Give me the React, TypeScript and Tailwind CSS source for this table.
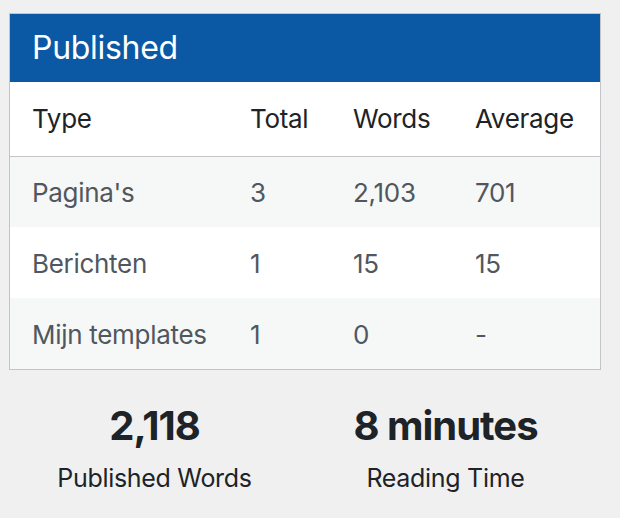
const rows = [
  { type: "Pagina's", total: "3", words: "2,103", average: "701" },
  { type: 'Berichten', total: '1', words: '15', average: '15' },
  { type: 'Mijn templates', total: '1', words: '0', average: '-' },
]

export default function App() {
  return (
    <div
      className="w-[620px] h-[518px] bg-[#f0f0f1] pt-[13px] pl-[9px]"
      style={{ fontFamily: 'Inter, "Noto Sans", sans-serif' }}
    >
      <div className="w-[592px] border border-[#c3c4c7] bg-white">
        <div className="h-[68px] bg-[#0b59a4] flex items-center px-[22px]">
          <h2 className="text-[32px] text-white leading-none tracking-[-0.3px]">Published</h2>
        </div>
        <table className="w-full border-collapse text-[26px] tracking-[-0.3px]">
          <thead>
            <tr className="h-[74px] border-b border-[#c3c4c7] text-[#1d2327]">
              <th className="text-left font-normal pl-[22px] w-[240px]">Type</th>
              <th className="text-left font-normal w-[103px]">Total</th>
              <th className="text-left font-normal w-[122px]">Words</th>
              <th className="text-left font-normal">Average</th>
            </tr>
          </thead>
          <tbody className="text-[#50575e]">
            {rows.map((r, i) => (
              <tr key={r.type} className={i % 2 === 0 ? 'h-[71px] bg-[#f6f7f7]' : 'h-[71px] bg-white'}>
                <td className="pl-[22px] pt-[2px]">{r.type}</td>
                <td className="pt-[2px]">{r.total}</td>
                <td className="pt-[2px]">{r.words}</td>
                <td className="pt-[2px]">{r.average}</td>
              </tr>
            ))}
          </tbody>
        </table>
      </div>
      <div className="flex text-[#1d2327] pt-[36px]">
        <div className="w-[291px] flex flex-col items-center">
          <div className="text-[40px] font-bold leading-none tracking-[-1px]">2,118</div>
          <div className="text-[25px] mt-[20px] leading-none tracking-[-0.3px]">Published Words</div>
        </div>
        <div className="w-[291px] flex flex-col items-center">
          <div className="text-[40px] font-bold leading-none tracking-[-1px]">8 minutes</div>
          <div className="text-[25px] mt-[20px] leading-none tracking-[-0.3px]">Reading Time</div>
        </div>
      </div>
    </div>
  )
}
